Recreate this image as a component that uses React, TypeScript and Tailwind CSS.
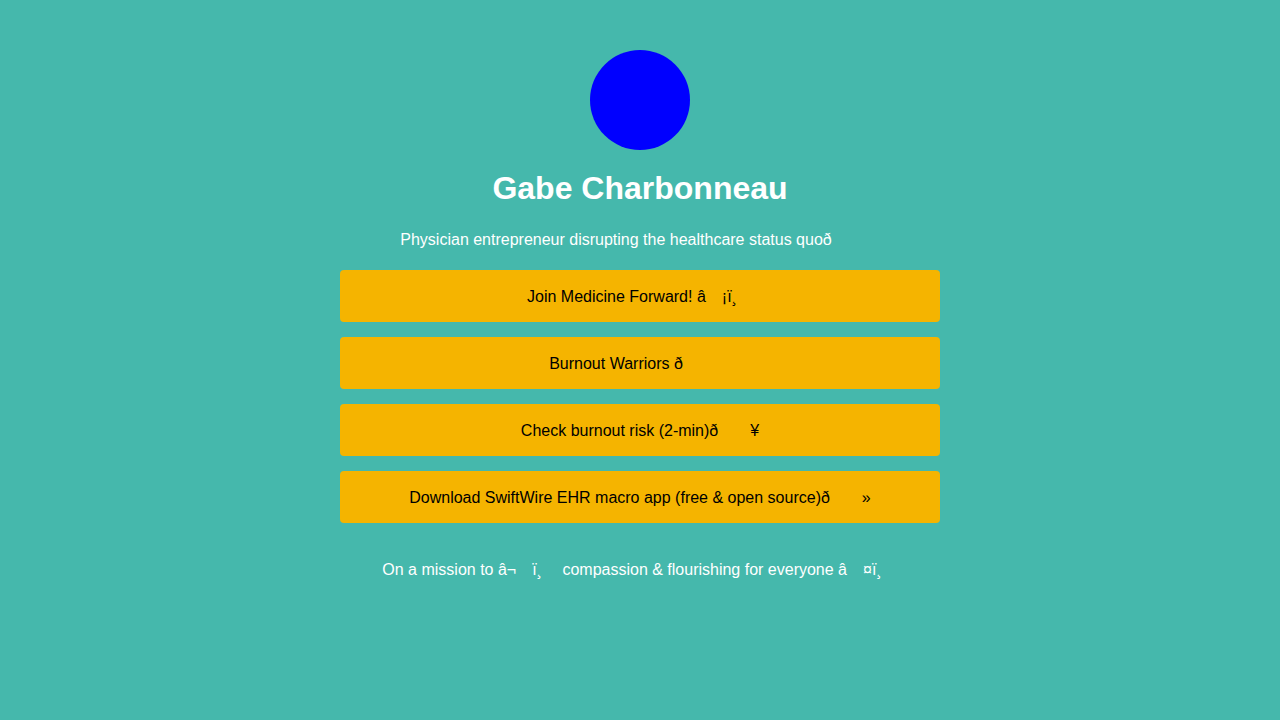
import React from "react";

const Gap = ({ n = 1 }: { n?: number }) => (
  <span className="inline-block" style={{ width: `${16 * n}px` }} />
);

const btn =
  "flex h-[52px] w-[600px] items-center justify-center rounded-[4px] bg-[#f5b400] pt-[2px] text-[16px] text-black whitespace-pre";

export default function App() {
  return (
    <div
      className="flex min-h-[720px] w-full flex-col items-center bg-[#45b8ac] pt-[50px] text-white"
      style={{ fontFamily: '"Liberation Sans", Arial, Helvetica, sans-serif' }}
    >
      <div className="h-[100px] w-[100px] rounded-full bg-[#0000ff]" />
      <h1 className="mt-[20px] text-[32px] font-bold leading-[37px]">Gabe Charbonneau</h1>
      <p className="mt-[24px] whitespace-pre text-[16px] leading-[18px]">
        Physician entrepreneur disrupting the healthcare status quoð
        <Gap n={3} />
      </p>
      <div className="mt-[21px] flex flex-col gap-[15px]">
        <div className={btn}>
          Join Medicine Forward! â<Gap />¡ï¸<Gap />
        </div>
        <div className={btn}>
          Burnout Warriors ð<Gap n={3} />
        </div>
        <div className={btn}>
          Check burnout risk (2-min)ð<Gap n={2} />¥
        </div>
        <div className={btn}>
          Download SwiftWire EHR macro app (free &amp; open source)ð<Gap n={2} />»
        </div>
      </div>
      <p className="mt-[38px] whitespace-pre text-[16px] leading-[18px]">
        On a mission to â¬<Gap />ï¸<Gap /> compassion &amp; flourishing for everyone â<Gap />¤ï¸<Gap />
      </p>
    </div>
  );
}
